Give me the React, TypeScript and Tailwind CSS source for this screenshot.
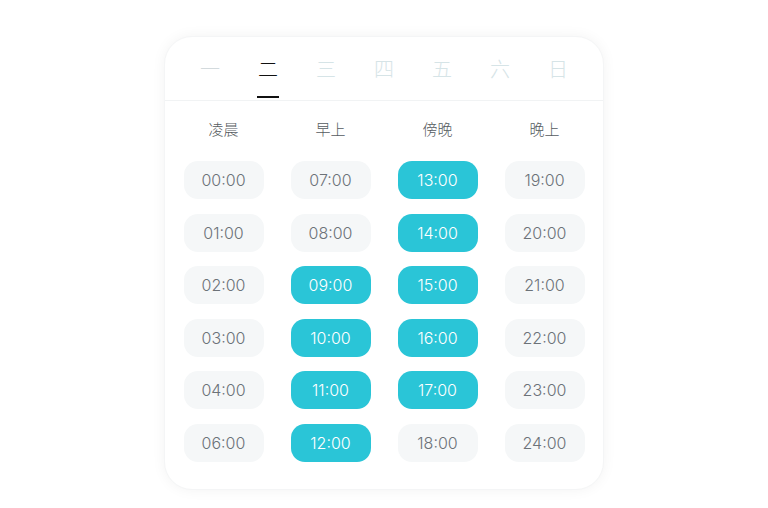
import React from "react";

const tabs = ["一", "二", "三", "四", "五", "六", "日"];
const headers = ["凌晨", "早上", "傍晚", "晚上"];
const cols: string[][] = [
  ["00:00", "01:00", "02:00", "03:00", "04:00", "06:00"],
  ["07:00", "08:00", "09:00", "10:00", "11:00", "12:00"],
  ["13:00", "14:00", "15:00", "16:00", "17:00", "18:00"],
  ["19:00", "20:00", "21:00", "22:00", "23:00", "24:00"],
];
const active = new Set(["09:00", "10:00", "11:00", "12:00", "13:00", "14:00", "15:00", "16:00", "17:00"]);

export default function App() {
  const rows = [0, 1, 2, 3, 4, 5];
  return (
    <div
      className="w-[768px] h-[508px] bg-white pt-[36px]"
      style={{ fontFamily: 'Inter, "Noto Sans CJK SC", sans-serif' }}
    >
      <div className="mx-auto w-[440px] rounded-[28px] bg-white shadow-[0_0_14px_rgba(0,0,0,0.05)] border border-[#f4f5f6] overflow-hidden">
        <div className="h-[63px] flex justify-center">
          {tabs.map((t, i) => (
            <div key={t} className="w-[58px] flex flex-col items-center pt-[21px]">
              <span
                className={
                  "text-[20px] leading-[24px] font-light " +
                  (i === 1 ? "text-[#111]" : i === 0 ? "text-[#d3dadd]" : "text-[#d6e4e7]")
                }
              >
                {t}
              </span>
              {i === 1 && <div className="mt-[14px] w-[22px] h-[2px] bg-[#111]" />}
            </div>
          ))}
        </div>
        <div className="h-px bg-[#f1f3f4]" />
        <div className="px-[5px] pt-[19px] pb-[27px]">
          <div className="grid grid-cols-4">
            {headers.map((h) => (
              <div key={h} className="text-center text-[15px] leading-[20px] font-light text-[#555b60]">
                {h}
              </div>
            ))}
          </div>
          <div className="mt-[21px] grid grid-cols-4 gap-y-[14.5px]">
            {rows.map((r) =>
              cols.map((c, ci) => {
                const v = c[r];
                const on = active.has(v);
                return (
                  <div key={ci + "-" + r} className="flex justify-center">
                    <div
                      className={
                        "w-[80px] h-[38px] rounded-[14px] flex items-center justify-center text-[16px] font-light " +
                        (on ? "bg-[#2ac5d7] text-white" : "bg-[#f5f7f8] text-[#6c7278]")
                      }
                    >
                      {v}
                    </div>
                  </div>
                );
              })
            )}
          </div>
        </div>
      </div>
    </div>
  );
}
